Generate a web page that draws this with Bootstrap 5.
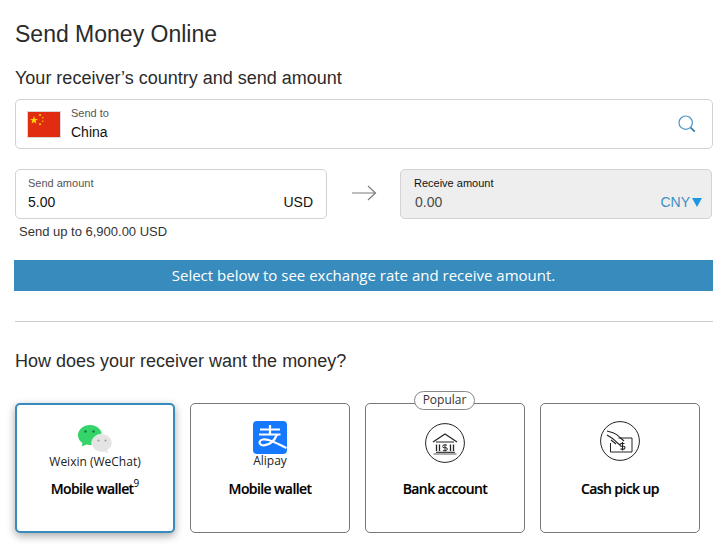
<!DOCTYPE html>
<html lang="en">
<head>
<meta charset="utf-8">
<title>Send Money Online</title>
<link href="https://cdn.jsdelivr.net/npm/bootstrap@5.3.0/dist/css/bootstrap.min.css" rel="stylesheet">
<style>
body { font-family: "Liberation Sans", Arial, sans-serif; color: #232323; background: #fff; overflow: hidden; }
.page-wrap { padding: 0 11px 0 15px; width: 724px; height: 554px; }
.page-title { font-size: 23px; line-height: 28px; font-weight: 400; margin: 20px 0 0; color: #2b2b2b; }
.sub-title { font-size: 18px; line-height: 22px; font-weight: 400; margin: 19px 0 0; color: #2b2b2b; }
.field-box { border: 1px solid #d2d2d2; border-radius: 5px; height: 50px; background: #fff; }
.country-box { margin-top: 10px; padding: 0 16px 0 11px; }
.flag-pic { width: 34px; height: 27px; display: block; }
.field-label { font-size: 11px; line-height: 13px; color: #555; }
.field-value { font-size: 14px; line-height: 18px; color: #111; }
.country-text { margin-left: 10px; }
.country-text .field-value { margin-top: 3px; }
.amount-row { margin-top: 20px; }
.amount-box { width: 312px; flex: none; padding: 7px 13px 7px 12px; }
.amount-box .field-value { margin-top: 3px; }
.arrow-cell { width: 73px; flex: none; }
.recv-box { background: #eee; color: #111; padding-left: 13px; padding-right: 9px; }
.recv-box .field-label { color: #111; }
.recv-val { color: #4a4a4a; padding-left: 1px; }
.cny-text { color: #3f8fc4; gap: 2px; }
.limit-text { font-size: 13px; line-height: 16px; margin: 5px 0 0 4px; color: #333; }
.rate-banner { margin: 20px 0 0 -1px; height: 31px; line-height: 31px; background: #388bbd; color: #fff; text-align: center; font-family: "Open Sans", sans-serif; font-size: 15px; width: 699px; }
.split-rule { border: 0; border-top: 1px solid #ccc; opacity: 1; margin: 30px 0 0; width: 698px; }
.how-title { font-size: 18px; line-height: 22px; margin: 28px 0 0; font-weight: 400; color: #2b2b2b; }
.option-row { margin-top: 31px; gap: 15px; }
.option-tile { width: 160px; height: 130px; border: 1px solid #777; border-radius: 5px; position: relative; text-align: center; background: #fff; font-family: "Open Sans", sans-serif; color: #111; padding-top: 17px; }
.option-tile.is-picked { border: 2px solid #388bbd; box-shadow: 0 3px 8px rgba(0,0,0,.35); padding-top: 20px; }
.option-tile.bank-tile { padding-top: 19px; }
.option-icon { display: block; margin: 0 auto; }
.option-name { font-size: 12px; line-height: 14px; color: #222; }
.is-picked .option-name { margin-top: 1px; }
.option-kind { font-size: 14px; font-weight: 600; line-height: 20px; letter-spacing: -.6px; color: #000; position: absolute; left: 0; right: 0; top: 75px; -webkit-text-stroke: .15px #000; }
.is-picked .option-kind { top: 74px; }
.option-kind sup { font-size: 10px; font-weight: 400; top: -.7em; letter-spacing: 0; -webkit-text-stroke: 0; }
.popular-tag { position: absolute; top: -13px; left: 48px; width: 61px; height: 19px; line-height: 16px; border: 1px solid #888; border-radius: 10px; background: #fff; font-size: 12px; color: #333; }
</style>
</head>
<body>
<div class="page-wrap">
  <h1 class="page-title">Send Money Online</h1>
  <h2 class="sub-title">Your receiver’s country and send amount</h2>

  <div class="field-box country-box d-flex align-items-center">
    <svg class="flag-pic" viewBox="0 0 34 27" role="img" aria-label="China flag">
      <rect x=".5" y=".5" width="33" height="26" fill="#e12c12" stroke="#d8d8d8"/>
      <polygon points="7,5 8,8 11,8 8.600,9.800 9.500,12.800 7,11 4.500,12.800 5.400,9.800 3,8 6,8" fill="#ffd400"/>
      <rect x="12" y="3" width="2" height="2" fill="#f7b500"/>
      <rect x="15" y="6" width="1.400" height="1.400" fill="#f7b500"/>
      <rect x="15" y="9.600" width="1.400" height="1.400" fill="#f7b500"/>
      <rect x="12" y="12.200" width="2" height="2" fill="#f7b500"/>
    </svg>
    <div class="country-text flex-grow-1">
      <div class="field-label">Send to</div>
      <div class="field-value">China</div>
    </div>
    <svg width="18" height="18" viewBox="0 0 18 18" fill="none" aria-hidden="true">
      <circle cx="7.700" cy="7.700" r="6.700" stroke="#4b94c6" stroke-width="1.200"/>
      <path d="M12.600 12.600 L16.800 16.600" stroke="#3a7ea8" stroke-width="1.800"/>
    </svg>
  </div>

  <div class="amount-row d-flex align-items-start">
    <div class="field-box amount-box">
      <div class="field-label">Send amount</div>
      <div class="field-value d-flex justify-content-between"><span>5.00</span><span>USD</span></div>
    </div>
    <div class="arrow-cell d-flex justify-content-center pt-3">
      <svg width="26" height="16" viewBox="0 0 26 16" fill="none" stroke="#7c7c7c" stroke-width="1.200" aria-hidden="true">
        <path d="M1 8H24.500M17 1l7.500 7-7.500 7"/>
      </svg>
    </div>
    <div class="field-box amount-box recv-box">
      <div class="field-label">Receive amount</div>
      <div class="field-value d-flex justify-content-between align-items-center">
        <span class="recv-val">0.00</span>
        <span class="cny-text d-flex align-items-center">CNY<svg width="10" height="9" viewBox="0 0 10 9" aria-hidden="true"><polygon points="0,0 10,0 5,9" fill="#1f96e0"/></svg></span>
      </div>
    </div>
  </div>
  <div class="limit-text">Send up to 6,900.00 USD</div>

  <div class="rate-banner">Select below to see exchange rate and receive amount.</div>
  <hr class="split-rule">
  <h2 class="how-title">How does your receiver want the money?</h2>

  <div class="option-row d-flex">
    <div class="option-tile is-picked">
      <svg class="option-icon" width="34" height="29" viewBox="0 0 34 29" aria-hidden="true">
        <path d="M12 0C5.400 0 0 4.500 0 10.200c0 3.200 1.700 6 4.400 7.900L4 21.600l4.300-2c1.200.3 2.400.5 3.700.5 6.600 0 12-4.500 12-9.900S18.600 0 12 0z" fill="#35d46a"/>
        <path d="M24 9c-5.500 0-10.300 4-10.300 9s4.800 9 10.300 9c.9 0 1.800-.1 2.600-.3L30 28.500l-.6-3.700C32.200 23.300 34 20.800 34 18c0-5-4.500-9-10-9z" fill="#e4e4e4" stroke="#fff" stroke-width=".5"/>
        <circle cx="7.500" cy="6.500" r="1.200" fill="#147a3b"/><circle cx="15.500" cy="6.500" r="1.200" fill="#147a3b"/>
        <circle cx="20.500" cy="15.500" r="1" fill="#999"/><circle cx="27.500" cy="15.500" r="1" fill="#999"/>
      </svg>
      <div class="option-name">Weixin (WeChat)</div>
      <div class="option-kind">Mobile wallet<sup>9</sup></div>
    </div>
    <div class="option-tile">
      <svg class="option-icon" width="34" height="33" viewBox="0 0 34 33" aria-hidden="true">
        <rect width="34" height="33" rx="4" fill="#1677ff"/>
        <path d="M17 4v9.500M7 8.500h20M6 13.500h21.500" stroke="#fff" stroke-width="2.200" fill="none"/>
        <path d="M24 13.500c-2.500 6-7 10-12 10.700-3.600.5-5.800-1-5.400-3.200.5-2.500 4.500-3.400 9-2 6 1.900 11.500 5 17.900 8" stroke="#fff" stroke-width="2.200" fill="none"/>
      </svg>
      <div class="option-name">Alipay</div>
      <div class="option-kind">Mobile wallet</div>
    </div>
    <div class="option-tile bank-tile">
      <span class="popular-tag">Popular</span>
      <svg class="option-icon" width="40" height="40" viewBox="0 0 40 40" fill="none" stroke="#222" aria-hidden="true">
        <circle cx="20" cy="20" r="19.400" stroke-width="1"/>
        <path d="M8 19 20 11l12 8M11 19h18" stroke-width="1.200"/>
        <path d="M11.500 21.500v6.500M14.500 21.500v6.500M25.500 21.500v6.500M28.500 21.500v6.500" stroke-width="1.300"/>
        <path d="M11 29.300h19" stroke-width="1.100"/>
        <path d="M8.500 31h23" stroke-width="1.200" stroke="#777"/>
        <path d="M22 22h-3a1 1 0 0 0 0 2.700h2a1 1 0 0 1 0 2.700h-3M20 21v7.500" stroke-width=".9"/>
      </svg>
      <div class="option-kind">Bank account</div>
    </div>
    <div class="option-tile">
      <svg class="option-icon" width="40" height="40" viewBox="0 0 40 40" fill="none" stroke="#222" aria-hidden="true">
        <circle cx="20" cy="20" r="19.400" stroke-width="1"/>
        <path d="M10.500 22v9h21.500V17H18.500" stroke-width="1"/>
        <path d="M7 10l6 1.800c3 1 5 2.500 7 4.700l4 3.500M7 14l5.500 3.500c2 1.500 3.500 3 5 4.500l2.500 2M11 19l5 4" stroke-width="1.100"/>
        <path d="M24.500 22.500h-3a1 1 0 0 0 0 2.800h2a1 1 0 0 1 0 2.800h-3M22.500 21v8.500" stroke-width="1.100"/>
      </svg>
      <div class="option-kind">Cash pick up</div>
    </div>
  </div>
</div>
<script src="https://cdn.jsdelivr.net/npm/bootstrap@5.3.0/dist/js/bootstrap.bundle.min.js"></script>
</body>
</html>
